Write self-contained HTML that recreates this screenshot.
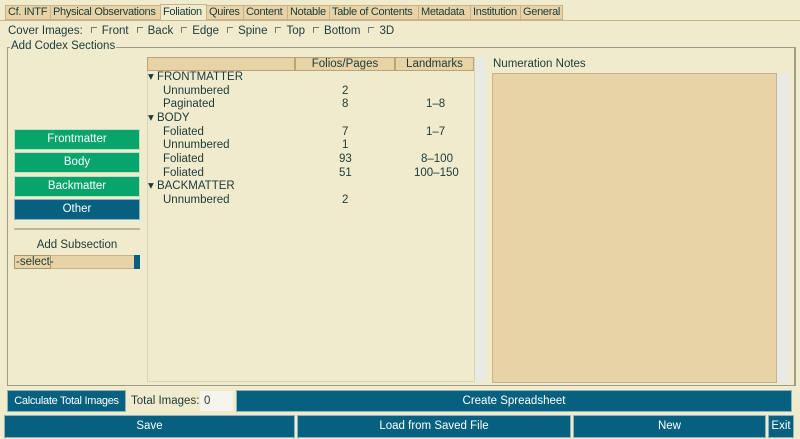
<!DOCTYPE html>
<html><head><style>
*{box-sizing:border-box;margin:0;padding:0}
body{width:800px;height:439px;background:#f0ebcc;font-family:"Liberation Sans",sans-serif;font-size:11.5px;color:#1c3a3a;position:relative;overflow:hidden}
.a{position:absolute;white-space:nowrap}
.tab{position:absolute;top:5px;height:15px;background:#e8d3a6;border:1px solid #c8b48c;font-size:11px;letter-spacing:-0.3px;line-height:13px;padding-left:2px;color:#1c3a3a;white-space:nowrap;overflow:hidden}
.btn{position:absolute;color:#fff;text-align:center;font-size:11.5px;white-space:nowrap}
.g{background:#07a46b;border:1px solid #bfe0c0}
.t{background:#05617f;border:1px solid #8fb2bc}
.cb{display:inline-block;width:6px;height:6px;border-left:1px solid #777;border-top:1px solid #777;margin:0 5px 1px 8px;vertical-align:middle}
.row{position:absolute;height:14px;line-height:14px;white-space:nowrap}
</style></head><body>
<div class="tab" style="left:5px;width:46px">Cf. INTF</div>
<div class="tab" style="left:50px;width:111px">Physical Observations</div>
<div class="tab" style="left:160px;width:47px;background:#f0ebcc;border-bottom:none;top:4px;height:17px;line-height:15px">Foliation</div>
<div class="tab" style="left:206px;width:38px">Quires</div>
<div class="tab" style="left:243px;width:45px">Content</div>
<div class="tab" style="left:287px;width:43px">Notable</div>
<div class="tab" style="left:329px;width:90px">Table of Contents</div>
<div class="tab" style="left:418px;width:53px">Metadata</div>
<div class="tab" style="left:470px;width:51px">Institution</div>
<div class="tab" style="left:520px;width:43px">General</div>
<div class="a" style="left:0;top:20px;width:800px;height:1px;background:#c8b48c"></div>
<div class="a" style="left:8px;top:25px">Cover Images:<span class="cb"></span>Front<span class="cb"></span>Back<span class="cb"></span>Edge<span class="cb"></span>Spine<span class="cb"></span>Top<span class="cb"></span>Bottom<span class="cb"></span>3D</div>
<div class="a" style="left:7px;top:47px;width:789px;height:339px;border:1px solid #9c9c88;border-right:2px solid #9c9c88"></div>
<div class="a" style="left:10px;top:40px;background:#f0ebcc;padding:0 1px">Add Codex Sections</div>
<div class="btn g" style="left:14px;top:129px;width:126px;height:21px;line-height:19px">Frontmatter</div>
<div class="btn g" style="left:14px;top:152px;width:126px;height:21px;line-height:19px">Body</div>
<div class="btn g" style="left:14px;top:176px;width:126px;height:21px;line-height:19px">Backmatter</div>
<div class="btn t" style="left:14px;top:199px;width:126px;height:21px;line-height:19px">Other</div>
<div class="a" style="left:14px;top:228px;width:126px;height:2px;background:#b8b8a4"></div>
<div class="a" style="left:14px;top:239px;width:126px;text-align:center">Add Subsection</div>
<div class="a" style="left:14px;top:255px;width:125px;height:14px;background:#e8d3a6;border:1px solid #c8b48c"></div>
<div class="a" style="left:14px;top:255px;width:37px;height:14px;border:1px solid #a89870;line-height:12px;padding-left:1px">-select-</div>
<div class="a" style="left:134px;top:255px;width:6px;height:14px;background:#05617f"></div>
<div class="a" style="left:147px;top:57px;width:328px;height:325px;background:#f0ebcc;border:1px solid #d8d4b8"></div>
<div class="a" style="left:147px;top:57px;width:148px;height:14px;background:#e8d3a6;border:1px solid #b8a478"></div>
<div class="a" style="left:295px;top:57px;width:100px;height:14px;background:#e8d3a6;border:1px solid #b8a478;text-align:center;line-height:12px">Folios/Pages</div>
<div class="a" style="left:395px;top:57px;width:79px;height:14px;background:#e8d3a6;border:1px solid #b8a478;text-align:center;line-height:12px">Landmarks</div>
<div class="a" style="left:475px;top:57px;width:11px;height:325px;background:#eaeae4"></div>
<div class="row" style="left:148px;top:70px">▾ FRONTMATTER</div>
<div class="row" style="left:163px;top:84px">Unnumbered</div><div class="row" style="left:342px;top:84px">2</div>
<div class="row" style="left:163px;top:97px">Paginated</div><div class="row" style="left:342px;top:97px">8</div><div class="row" style="left:426px;top:97px">1–8</div>
<div class="row" style="left:148px;top:111px">▾ BODY</div>
<div class="row" style="left:163px;top:125px">Foliated</div><div class="row" style="left:342px;top:125px">7</div><div class="row" style="left:426px;top:125px">1–7</div>
<div class="row" style="left:163px;top:138px">Unnumbered</div><div class="row" style="left:342px;top:138px">1</div>
<div class="row" style="left:163px;top:152px">Foliated</div><div class="row" style="left:339px;top:152px">93</div><div class="row" style="left:421px;top:152px">8–100</div>
<div class="row" style="left:163px;top:166px">Foliated</div><div class="row" style="left:339px;top:166px">51</div><div class="row" style="left:414px;top:166px">100–150</div>
<div class="row" style="left:148px;top:179px">▾ BACKMATTER</div>
<div class="row" style="left:163px;top:193px">Unnumbered</div><div class="row" style="left:342px;top:193px">2</div>
<div class="a" style="left:493px;top:58px">Numeration Notes</div>
<div class="a" style="left:492px;top:73px;width:285px;height:310px;background:#e8d3a6;border:1px solid #c8b48c"></div>
<div class="a" style="left:777px;top:73px;width:12px;height:310px;background:#eaeae4"></div>
<div class="btn t" style="left:7px;top:390px;width:119px;height:22px;line-height:20px;font-size:11px;letter-spacing:-0.3px">Calculate Total Images</div>
<div class="a" style="left:131px;top:395px">Total Images:</div>
<div class="a" style="left:200px;top:391px;width:33px;height:20px;background:#f5f5ee;padding:4px">0</div>
<div class="btn t" style="left:236px;top:390px;width:556px;height:22px;line-height:20px">Create Spreadsheet</div>
<div class="btn t" style="left:4px;top:415px;width:291px;height:23px;line-height:21px">Save</div>
<div class="btn t" style="left:297px;top:415px;width:274px;height:23px;line-height:21px">Load from Saved File</div>
<div class="btn t" style="left:573px;top:415px;width:193px;height:23px;line-height:21px">New</div>
<div class="btn t" style="left:768px;top:415px;width:26px;height:23px;line-height:21px">Exit</div>
</body></html>
